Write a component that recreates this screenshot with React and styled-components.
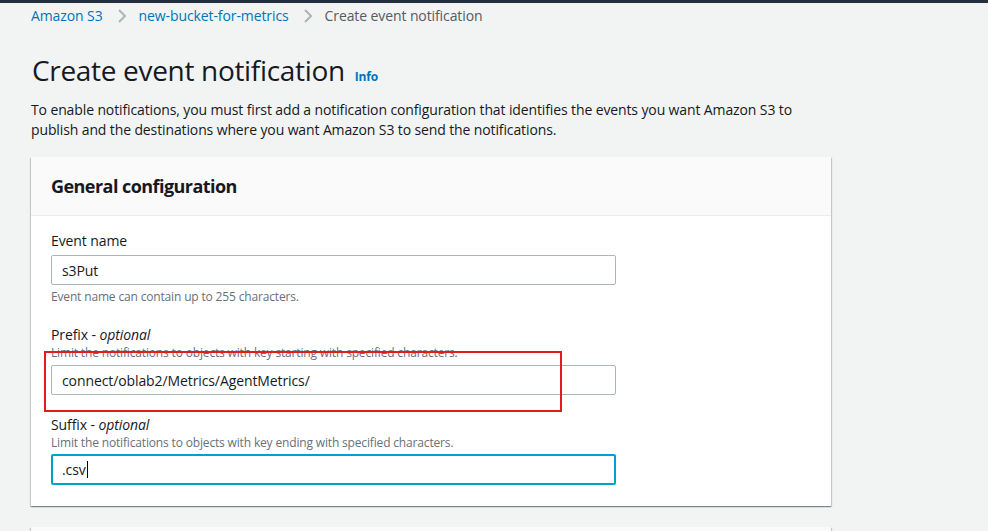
import React from "react";
import styled, { createGlobalStyle } from "styled-components";

const Global = createGlobalStyle`
  html, body { margin: 0; padding: 0; background: #f2f3f3; }
  body { font-family: "Open Sans", "Liberation Sans", Arial, sans-serif; color: #16191f; }
  * { box-sizing: border-box; }
`;

const TopBar = styled.div`
  height: 3px;
  background: #232f3e;
`;

const Page = styled.main`
  padding: 3px 0 0 31px;
  width: 831px;
`;

const Crumbs = styled.nav`
  display: flex;
  align-items: center;
  height: 20px;
  font-size: 14px;
  line-height: 20px;
  letter-spacing: -0.1px;
`;

const Crumb = styled.span`
  color: ${(p) => (p.$current ? "#545b64" : "#0073bb")};
`;

const Sep = styled.span`
  display: inline-flex;
  margin: 0 13px 0 15px;
  color: #aab7b8;
`;

const TitleRow = styled.div`
  display: flex;
  align-items: baseline;
  gap: 10px;
  margin-top: 26px;
  padding-left: 1px;
`;

const Title = styled.h1`
  margin: 0;
  font-size: 28px;
  line-height: 36px;
  font-weight: 400;
  letter-spacing: -0.32px;
  color: #16191f;
`;

const Info = styled.a`
  font-size: 12px;
  font-weight: 700;
  letter-spacing: -0.2px;
  color: #0073bb;
  text-decoration: none;
`;

const Lead = styled.p`
  margin: 12px 0 0;
  font-size: 14px;
  line-height: 20px;
  letter-spacing: -0.12px;
  color: #16191f;
  max-width: 800px;
`;

const Card = styled.section`
  margin-top: ${(p) => p.$mt || 17}px;
  width: 800px;
  background: #fff;
  box-shadow: 0 1px 1px 0 rgba(0, 28, 36, 0.3), 1px 1px 1px 0 rgba(0, 28, 36, 0.15),
    -1px 1px 1px 0 rgba(0, 28, 36, 0.15);
`;

const CardHeader = styled.header`
  background: #fafafa;
  border-bottom: 1px solid #eaeded;
  padding: 18px 20px;
`;

const CardTitle = styled.h2`
  margin: 0;
  font-size: 18px;
  line-height: 22px;
  font-weight: 700;
  letter-spacing: -0.55px;
  color: #16191f;
`;

const CardBody = styled.div`
  position: relative;
  padding: 14px 20px 21px;
  display: flex;
  flex-direction: column;
  gap: 19px;
`;

const Field = styled.div`
  display: flex;
  flex-direction: column;
`;

const Label = styled.div`
  font-size: 14px;
  line-height: 20px;
  letter-spacing: -0.1px;
  color: #16191f;
  padding-top: 1px;
  em { font-style: italic; }
`;

const Hint = styled.div`
  font-size: 12px;
  line-height: 16px;
  letter-spacing: -0.16px;
  color: #687078;
  margin-top: ${(p) => p.$mt || 0}px;
`;

const Input = styled.div`
  margin-top: ${(p) => p.$mt || 0}px;
  width: 565px;
  height: ${(p) => (p.$focus ? 31 : 30)}px;
  border: ${(p) => (p.$focus ? "2px solid #00a1c9" : "1px solid #aab7b8")};
  border-radius: 2px;
  background: #fff;
  display: flex;
  align-items: center;
  padding-left: ${(p) => (p.$focus ? 9 : 10)}px;
  font-size: 14px;
  letter-spacing: -0.1px;
  color: #16191f;
`;

const Caret = styled.span`
  display: inline-block;
  width: 1px;
  height: 17px;
  background: #000;
  margin-left: 1px;
`;

const Annotation = styled.div`
  position: absolute;
  left: 13px;
  top: 135px;
  width: 518px;
  height: 61px;
  border: 2px solid #e31b1b;
  pointer-events: none;
`;

const Chevron = () => (
  <svg width="8" height="14" viewBox="0 0 8 14">
    <polyline points="1,1 7,7 1,13" fill="none" stroke="currentColor" strokeWidth="2" />
  </svg>
);

export default function App() {
  return (
    <>
      <Global />
      <TopBar />
      <Page>
        <Crumbs>
          <Crumb>Amazon S3</Crumb>
          <Sep><Chevron /></Sep>
          <Crumb>new-bucket-for-metrics</Crumb>
          <Sep><Chevron /></Sep>
          <Crumb $current>Create event notification</Crumb>
        </Crumbs>
        <TitleRow>
          <Title>Create event notification</Title>
          <Info>Info</Info>
        </TitleRow>
        <Lead>
          To enable notifications, you must first add a notification configuration that identifies the events you want Amazon S3 to publish and the destinations where you want Amazon S3 to send the notifications.
        </Lead>
        <Card>
          <CardHeader>
            <CardTitle>General configuration</CardTitle>
          </CardHeader>
          <CardBody>
            <Field>
              <Label>Event name</Label>
              <Input $mt={4}>s3Put</Input>
              <Hint $mt={4}>Event name can contain up to 255 characters.</Hint>
            </Field>
            <Field>
              <Label>Prefix - <em>optional</em></Label>
              <Hint>Limit the notifications to objects with key starting with specified characters.</Hint>
              <Input $mt={4}>connect/oblab2/Metrics/AgentMetrics/</Input>
            </Field>
            <Field>
              <Label>Suffix - <em>optional</em></Label>
              <Hint>Limit the notifications to objects with key ending with specified characters.</Hint>
              <Input $mt={3} $focus>.csv<Caret /></Input>
            </Field>
            <Annotation />
          </CardBody>
        </Card>
        <Card $mt={21}>
          <CardHeader>
            <CardTitle>Event types</CardTitle>
          </CardHeader>
        </Card>
      </Page>
    </>
  );
}
